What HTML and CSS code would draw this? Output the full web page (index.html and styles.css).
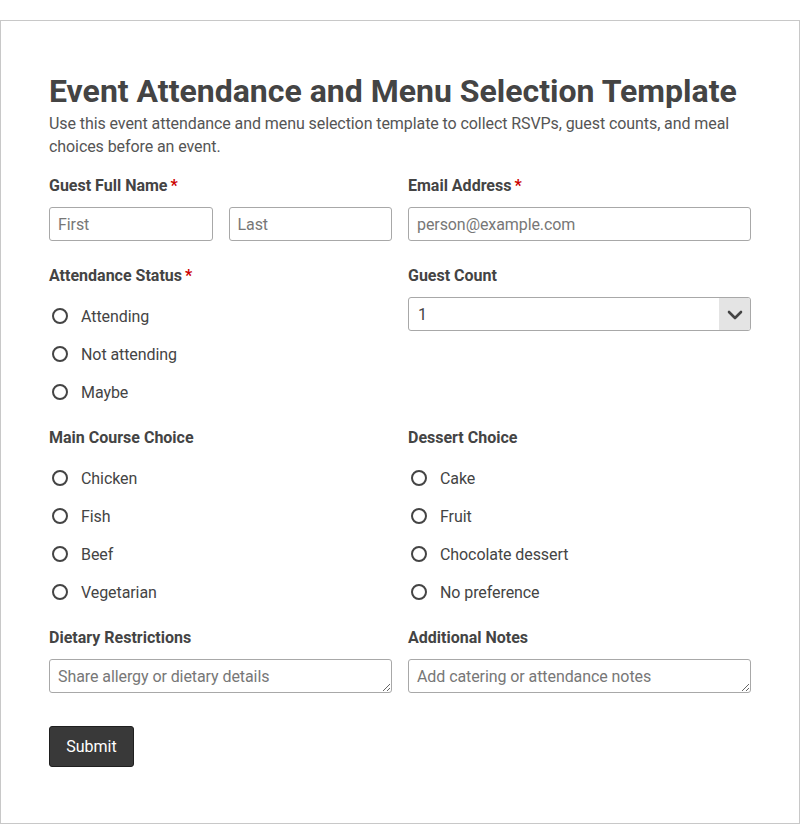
FILE: index.html
```html
<!DOCTYPE html>
<html lang="en">
<head>
<meta charset="utf-8">
<title>Event Attendance and Menu Selection Template</title>
<link rel="stylesheet" href="styles.css">
</head>
<body>
<form class="card">
  <h1 class="title">Event Attendance and Menu Selection Template</h1>
  <p class="desc">Use this event attendance and menu selection template to collect RSVPs, guest counts, and meal choices before an event.</p>
  <div class="grid">
    <div class="field">
      <div class="label">Guest Full Name<span class="req">*</span></div>
      <div class="name-row">
        <input class="input" type="text" placeholder="First">
        <input class="input" type="text" placeholder="Last">
      </div>
    </div>
    <div class="field">
      <div class="label">Email Address<span class="req">*</span></div>
      <input class="input" type="email" placeholder="person@example.com">
    </div>
    <div class="field">
      <div class="label">Attendance Status<span class="req">*</span></div>
      <div class="radios">
        <label class="radio"><input type="radio" name="att"><span>Attending</span></label>
        <label class="radio"><input type="radio" name="att"><span>Not attending</span></label>
        <label class="radio"><input type="radio" name="att"><span>Maybe</span></label>
      </div>
    </div>
    <div class="field">
      <div class="label">Guest Count</div>
      <div class="select">
        <span class="select-value">1</span>
        <span class="select-arrow"><svg width="16" height="10" viewBox="0 0 16 10"><path d="M2 2 L8 8 L14 2" fill="none" stroke="#444" stroke-width="2.6" stroke-linecap="round" stroke-linejoin="round"/></svg></span>
      </div>
    </div>
    <div class="field">
      <div class="label">Main Course Choice</div>
      <div class="radios">
        <label class="radio"><input type="radio" name="main"><span>Chicken</span></label>
        <label class="radio"><input type="radio" name="main"><span>Fish</span></label>
        <label class="radio"><input type="radio" name="main"><span>Beef</span></label>
        <label class="radio"><input type="radio" name="main"><span>Vegetarian</span></label>
      </div>
    </div>
    <div class="field">
      <div class="label">Dessert Choice</div>
      <div class="radios">
        <label class="radio"><input type="radio" name="dessert"><span>Cake</span></label>
        <label class="radio"><input type="radio" name="dessert"><span>Fruit</span></label>
        <label class="radio"><input type="radio" name="dessert"><span>Chocolate dessert</span></label>
        <label class="radio"><input type="radio" name="dessert"><span>No preference</span></label>
      </div>
    </div>
    <div class="field">
      <div class="label">Dietary Restrictions</div>
      <textarea class="input textarea" rows="1" placeholder="Share allergy or dietary details"></textarea>
    </div>
    <div class="field">
      <div class="label">Additional Notes</div>
      <textarea class="input textarea" rows="1" placeholder="Add catering or attendance notes"></textarea>
    </div>
  </div>
  <button class="submit" type="button">Submit</button>
</form>
</body>
</html>
```
FILE: styles.css
```css
* { box-sizing: border-box; }
html, body { margin: 0; padding: 0; background: #fff; }
body {
  font-family: Roboto, "Liberation Sans", Arial, sans-serif;
  color: #444;
  padding-top: 20px;
}
.card {
  width: 800px;
  height: 804px;
  border: 1px solid #c8c8c8;
  padding: 50px 48px 48px 48px;
}
.title {
  margin: 0;
  font-size: 32px;
  line-height: 40px;
  font-weight: 700;
  color: #444;
  white-space: nowrap;
}
.desc {
  margin: 1px 0 0 0;
  font-size: 16px;
  line-height: 23px;
  color: #555;
  letter-spacing: -0.08px;
}
.grid {
  margin-top: 17px;
  display: grid;
  grid-template-columns: 1fr 1fr;
  column-gap: 16px;
  row-gap: 24px;
}
.label {
  font-size: 16px;
  line-height: 22px;
  font-weight: 700;
  color: #444;
  margin-bottom: 10px;
}
.req { color: #c00; margin-left: 3px; }
.name-row {
  display: grid;
  grid-template-columns: 1fr 1fr;
  column-gap: 16px;
}
.input {
  display: block;
  width: 100%;
  height: 34px;
  border: 1px solid #a8a8a8;
  border-radius: 3px;
  padding: 0 8px;
  font-family: Roboto, "Liberation Sans", Arial, sans-serif;
  font-size: 16px;
  color: #444;
  background: #fff;
  margin: 0;
  letter-spacing: -0.08px;
}
.input::placeholder { color: #777; opacity: 1; }
.textarea {
  padding: 7px 8px 5px 8px;
  line-height: 20px;
  resize: vertical;
}
.select {
  display: flex;
  align-items: stretch;
  height: 34px;
  border: 1px solid #a8a8a8;
  border-radius: 3px;
  overflow: hidden;
}
.select-value {
  flex: 1;
  display: flex;
  align-items: center;
  padding-left: 9px;
  font-size: 16px;
  color: #444;
}
.select-arrow {
  width: 31px;
  background: #e4e4e4;
  display: flex;
  align-items: center;
  justify-content: center;
  padding-top: 1px;
}
.radios {
  display: flex;
  flex-direction: column;
  gap: 16px;
  padding-top: 8px;
}
.radio {
  display: flex;
  align-items: center;
  height: 22px;
  font-size: 16px;
  color: #444;
  letter-spacing: -0.08px;
}
.radio input {
  appearance: none;
  -webkit-appearance: none;
  width: 16px;
  height: 16px;
  border: 2px solid #444;
  border-radius: 50%;
  margin: 0 13px 0 3px;
  background: #fff;
}
.submit {
  margin-top: 33px;
  display: block;
  width: 85px;
  height: 41px;
  background: #393939;
  border: 1px solid #1f1f1f;
  border-radius: 3px;
  color: #fff;
  font-family: Roboto, "Liberation Sans", Arial, sans-serif;
  font-size: 16px;
  padding: 0;
}
```
